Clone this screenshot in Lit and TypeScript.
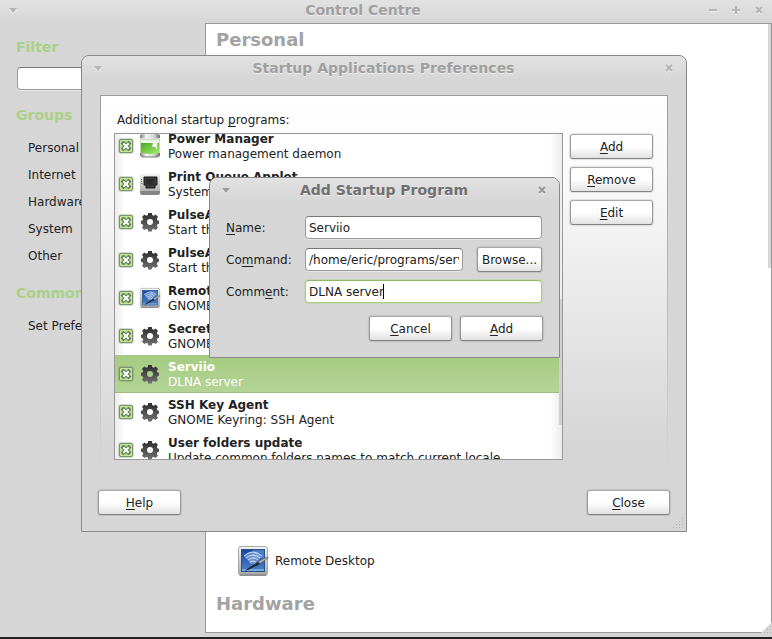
import { LitElement, html, svg, css } from "lit";
import { customElement, property } from "lit/decorators.js";

type IconName = "gear" | "battery" | "printer" | "remote";

const icons = {
  gear: svg`
    <defs>
      <linearGradient id="g" gradientUnits="userSpaceOnUse" x1="0" y1="1" x2="0" y2="19">
        <stop offset="0" stop-color="#2c2c2c" /><stop offset="1" stop-color="#707070" />
      </linearGradient>
      <mask id="hole"><rect width="20" height="20" fill="#fff" /><circle cx="10" cy="10" r="3" fill="#000" /></mask>
    </defs>
    <g mask="url(#hole)">
      <path fill="url(#g)" d="M8.200 1h3.600l.3 2.100 1.800.7 1.800-1.200 2.300 2.300-1.200 1.800.7 1.800 1.500.3v3l-1.500.4-.7 1.800 1.200 1.800-2.300 2.300-1.800-1.200-1.800.7-.3 1.900H8.200l-.3-1.900-1.800-.7-1.800 1.200-2.300-2.300 1.200-1.800-.7-1.800L1 11.800v-3l1.500-.3.7-1.800L2 4.900l2.300-2.300 1.800 1.200 1.800-.7z" />
    </g>`,
  battery: svg`
    <defs>
      <linearGradient id="m" x1="0" x2="1" y1="0" y2="0">
        <stop offset="0" stop-color="#777" /><stop offset=".3" stop-color="#f4f4f4" />
        <stop offset=".7" stop-color="#d8d8d8" /><stop offset="1" stop-color="#666" />
      </linearGradient>
      <linearGradient id="c" x1="0" x2="1" y1="0" y2="1">
        <stop offset="0" stop-color="#4aa825" /><stop offset="1" stop-color="#a5ec68" />
      </linearGradient>
    </defs>
    <path d="M0 2V0q0-2 3-2h14q3 0 3 2v2q-10 2-20 0z" fill="url(#m)" />
    <path d="M.5 3q9.500 1.500 19 0v15H.5z" fill="#edf5e8" stroke="#c6d8ba" />
    <path d="M1 7h18v10q-9 2-18 0z" fill="url(#c)" />
    <path d="M13 7h4v7l-1.500-3H12z" fill="#fff" />
    <path d="M0 17q10 2 20 0v2q0 2-3 2H3q-3 0-3-2z" fill="url(#m)" />
    <path d="M2 21h16" stroke="#777" />`,
  printer: svg`
    <defs>
      <linearGradient id="p" x1="0" x2="0" y1="0" y2="1">
        <stop offset="0" stop-color="#f2f2f2" /><stop offset="1" stop-color="#a8a8a8" />
      </linearGradient>
    </defs>
    <rect x="0" y="0" width="20" height="20" rx="2" fill="url(#p)" />
    <path d="M0 17h20v1q0 3-2 3H2q-2 0-2-3z" fill="#858585" />
    <path d="M4 3h13v8h-2v3H6v-3H4z" fill="#3a3a3a" stroke="#1a1a1a" stroke-linejoin="round" />
    <path d="M7 10V5M9 11V5M11 11V5M13 11V5" stroke="#202020" />
    <rect x="1" y="5" width="1" height="1" fill="#d33" /><rect x="1" y="7" width="1" height="1" fill="#d33" />
    <rect x="1" y="9" width="1" height="1" fill="#2c9a36" />`,
  remote: svg`
    <defs>
      <linearGradient id="r" x1="0" x2="0" y1="0" y2="1">
        <stop offset="0" stop-color="#f6f6f6" /><stop offset="1" stop-color="#a8a8a8" />
      </linearGradient>
      <linearGradient id="b" x1="0" x2="0" y1="0" y2="1">
        <stop offset="0" stop-color="#19479b" /><stop offset="1" stop-color="#4c83cc" />
      </linearGradient>
    </defs>
    <rect x=".5" y=".5" width="29" height="29" rx="2.5" fill="url(#r)" stroke="#a8a8a8" />
    <path d="M2 29h26" stroke="#777" />
    <rect x="3.5" y="3.5" width="23" height="22" fill="url(#b)" stroke="#2a5090" />
    <path d="M15 4h11v9q-6-2-11 0z" fill="#5d92d6" opacity=".7" />
    <path d="M4 23h22v2H4z" fill="#8db6e8" opacity=".7" />
    <path d="M6 10q9-9 18 0l-7 8h-4z" fill="#8fb3e2" opacity=".6" />
    <g fill="none" stroke="#dbe8f8" stroke-width="1" opacity=".9">
      <path d="M6 10q9-8 18 0" /><path d="M8 12q7-6 14 0" /><path d="M10 14q5-4 10 0" /><path d="M12 16q3-2 6 0" />
    </g>
    <path d="M7 25l2-2 11-7 2 2-12 6z" fill="#262626" />
    <path d="M20 15.500l9-4.500 1.500 1-8.500 5.500z" fill="#b4b4b4" stroke="#555" stroke-width=".6" />`,
};

@customElement("app-icon")
export class AppIcon extends LitElement {
  @property() name: IconName = "gear";

  static styles = css`
    :host { display: block; }
    .icon { display: block; width: 100%; height: 100%; overflow: visible; }
  `;

  render() {
    const box = this.name === "remote" ? "0 0 30 30" : "0 0 20 20";
    return html`<svg class="icon" viewBox=${box} aria-hidden="true">${icons[this.name]}</svg>`;
  }
}

const base = css`
  :host, * { box-sizing: border-box; }
  .btn {
    flex: none; width: 83px; height: 25px; padding: 0;
    font: inherit; color: #222;
    border: 1px solid #999; border-top-color: #aaa; border-bottom-color: #808080;
    border-radius: 3px;
    background: linear-gradient(#fff 50%, #e2e2e2);
    box-shadow: 0 0 1px 1px rgba(0, 0, 0, .1);
  }
  .btn.small { width: 65px; }
  .field {
    width: 100%; min-width: 0; height: 23px; padding: 0 3px;
    font: inherit; color: #222; background: #fff;
    border: 1px solid #999; border-top-color: #777;
    border-radius: 4px; outline: none;
    box-shadow: 0 1px 0 #e9e9e9;
  }
  .field.active { border-color: #a9d17c; border-top-color: #8fb765; box-shadow: 0 0 0 1px #c7d6b8; }
  u { text-decoration-thickness: 1px; text-underline-offset: 2px; text-decoration-skip-ink: none; }
`;

@customElement("title-bar")
export class TitleBar extends LitElement {
  @property() label = "";
  @property({ type: Boolean }) full = false;
  @property({ type: Boolean }) focused = false;

  static styles = css`
    :host { display: block; }
    .bar {
      box-sizing: border-box; height: 23px; display: flex; align-items: center;
      padding: 0 12px 0 11px; color: #a0a0a0;
      background: linear-gradient(#e2e2e2, #d6d6d6);
      border-radius: 7px 7px 0 0;
      font: bold 14px/20px "DejaVu Sans", sans-serif;
    }
    .bar.full { padding: 0 8px 3px; border-radius: 0; }
    .bar.focused { color: #707070; }
    .title { flex: 1; margin: 0; font: inherit; text-align: center; white-space: nowrap; text-shadow: 0 1px 0 #eee; }
    .tool { padding: 0; border: 0; background: none; color: #b4b4b4; display: block; }
    .focused .tool { color: #999; }
    .tools { display: flex; gap: 13px; }
    .glyph { display: block; width: 10px; height: 10px; filter: drop-shadow(0 1px 0 #f2f2f2); }
  `;

  render() {
    const glyph = (label: string, d: string) => html`
      <button class="tool" aria-label=${label}>
        <svg class="glyph" viewBox="0 0 10 10"><path d=${d} fill="none" stroke="currentColor" stroke-width="2" /></svg>
      </button>`;
    return html`
      <div class="bar ${this.focused ? "focused" : ""} ${this.full ? "full" : ""}">
        <button class="tool" aria-label="Window menu">
          <svg class="glyph" viewBox="0 0 10 10"><path d="M1 3h8L5 8z" fill="currentColor" /></svg>
        </button>
        <h1 class="title">${this.label}</h1>
        <div class="tools">
          ${this.full ? html`${glyph("Minimise", "M1 5h8")}${glyph("Maximise", "M1 5h8M5 1v8")}` : ""}
          ${glyph("Close", "M2 2l6 6M8 2l-6 6")}
        </div>
      </div>`;
  }
}

@customElement("add-program-dialog")
export class AddProgramDialog extends LitElement {
  static styles = [base, css`
    :host { display: block; background: #d6d6d6; border: 1px solid #888; border-radius: 8px 8px 0 0; }
    .form { padding: 14px 16px 16px; display: grid; grid-template-columns: 79px 1fr; row-gap: 7px; align-items: center; }
    .row { display: flex; align-items: center; gap: 14px; height: 25px; padding-right: 1px; position: relative; }
    .caret { position: absolute; left: 78px; top: 5px; width: 1px; height: 15px; background: #000; }
    .actions { grid-column: 1 / -1; display: flex; justify-content: flex-end; gap: 8px; padding-top: 5px; }
  `];

  render() {
    return html`
      <title-bar label="Add Startup Program" focused></title-bar>
      <form class="form">
        <label for="name"><u>N</u>ame:</label>
        <div class="row"><input class="field" id="name" .value=${"Serviio"} /></div>
        <label for="command">Co<u>m</u>mand:</label>
        <div class="row">
          <input class="field" id="command" .value=${"/home/eric/programs/serviio"} />
          <button class="btn small" type="button">Browse...</button>
        </div>
        <label for="comment">Comm<u>e</u>nt:</label>
        <div class="row"><input class="field active" id="comment" .value=${"DLNA server"} /><span class="caret"></span></div>
        <div class="actions">
          <button class="btn" type="button"><u>C</u>ancel</button>
          <button class="btn" type="button"><u>A</u>dd</button>
        </div>
      </form>`;
  }
}

interface Program { name: string; comment: string; icon: IconName; selected?: boolean }

const programs: Program[] = [
  { name: "Power Manager", comment: "Power management daemon", icon: "battery" },
  { name: "Print Queue Applet", comment: "System tray icon", icon: "printer" },
  { name: "PulseAudio", comment: "Start the sound system", icon: "gear" },
  { name: "PulseAudio", comment: "Start the sound system", icon: "gear" },
  { name: "Remote Desktop", comment: "GNOME Remote Desktop", icon: "remote" },
  { name: "Secret Storage", comment: "GNOME Keyring", icon: "gear" },
  { name: "Serviio", comment: "DLNA server", icon: "gear", selected: true },
  { name: "SSH Key Agent", comment: "GNOME Keyring: SSH Agent", icon: "gear" },
  { name: "User folders update", comment: "Update common folders names to match current locale", icon: "gear" },
];

@customElement("startup-dialog")
export class StartupDialog extends LitElement {
  static styles = [base, css`
    :host {
      display: flex; flex-direction: column;
      background: #d6d6d6; border: 1px solid #888; border-radius: 8px 8px 0 0;
    }
    .panel {
      flex: 1; min-height: 0; margin: 16px 18px 0; padding: 1px 1px 0;
      background: linear-gradient(#999, #d6d6d6);
      display: flex;
    }
    .body {
      flex: 1; min-width: 0; padding: 15px 14px 15px 13px;
      background: linear-gradient(#fff, #fafafa 20%, #d6d6d6 92%);
      display: grid; grid-template: 16px 1fr / 1fr 83px; gap: 6px 7px;
    }
    .caption { grid-column: 1 / -1; padding-left: 3px; line-height: 18px; }
    .listbox {
      position: relative; min-height: 0; overflow: hidden; border: 1px solid #999;
      background: linear-gradient(90deg, #ececec, #fff 10px, #fff calc(100% - 12px), #ececec);
    }
    .list { list-style: none; margin: -7px 0 0; padding: 0; }
    .item { display: flex; align-items: center; height: 38px; padding-left: 4px; line-height: 15px; }
    .item.selected {
      color: #fff; background: linear-gradient(#a5cb80, #b3d496);
      border-bottom: 1px solid #9cbd7c; margin-right: 3px;
    }
    .check {
      appearance: none; flex: none; width: 14px; height: 14px; margin: 0 7px 0 0;
      border: 1px solid #7b9168; border-radius: 2px;
      background: url("data:image/svg+xml,%3Csvg xmlns='http://www.w3.org/2000/svg' viewBox='0 0 12 12'%3E%3Crect x='.5' y='.5' width='11' height='11' fill='none' stroke='%23c3e6a4'/%3E%3Cpath d='M3.500 3.500l5 5M8.500 3.500l-5 5' stroke='%23627b50' stroke-width='4' stroke-linecap='square'/%3E%3Cpath d='M4 4l4 4M8 4l-4 4' stroke='%23fff' stroke-width='2' stroke-linecap='square'/%3E%3C/svg%3E") center / 12px 12px #b0d98c;
      box-shadow: 0 0 0 1px rgba(90, 120, 70, .25);
    }
    .icon { width: 20px; height: 20px; margin-right: 8px; flex: none; }
    .text { padding-top: 2px; }
    .name { display: block; font-weight: bold; white-space: nowrap; }
    .comment { display: block; white-space: nowrap; }
    .thumb { position: absolute; right: 0; top: 165px; width: 3px; height: 126px; background: #d0d0d0; }
    .side { display: flex; flex-direction: column; gap: 8px; padding-top: 1px; }
    .footer { display: flex; justify-content: space-between; padding: 15px 16px 16px; }
    .grip { position: absolute; right: 2px; bottom: 2px; width: 12px; height: 12px; fill: #b0b0b0; }
  `];

  render() {
    return html`
      <title-bar label="Startup Applications Preferences"></title-bar>
      <div class="panel">
        <div class="body">
          <span class="caption">Additional startup <u>p</u>rograms:</span>
          <div class="listbox">
            <ul class="list">
              ${programs.map((p, i) => html`
                <li class="item ${p.selected ? "selected" : ""}">
                  <input class="check" type="checkbox" id="p${i}" checked />
                  <app-icon class="icon" name=${p.icon}></app-icon>
                  <label class="text" for="p${i}"><span class="name">${p.name}</span><span class="comment">${p.comment}</span></label>
                </li>`)}
            </ul>
            <div class="thumb"></div>
          </div>
          <div class="side">
            <button class="btn"><u>A</u>dd</button>
            <button class="btn"><u>R</u>emove</button>
            <button class="btn"><u>E</u>dit</button>
          </div>
        </div>
      </div>
      <div class="footer">
        <button class="btn"><u>H</u>elp</button>
        <button class="btn"><u>C</u>lose</button>
      </div>
      <svg class="grip" viewBox="0 0 12 12" aria-hidden="true">
        ${[[10, 1], [7, 4], [10, 4], [4, 7], [7, 7], [10, 7], [1, 10], [4, 10], [7, 10], [10, 10]].map(
          ([x, y]) => svg`<rect x=${x} y=${y} width="1" height="1" />`)}
      </svg>`;
  }
}

@customElement("app-root")
export class AppRoot extends LitElement {
  static styles = [base, css`
    :host {
      display: flex; flex-direction: column; position: relative; overflow: hidden;
      height: 100vh; color: #222; background: #d6d6d6;
      font: 12px/16px "DejaVu Sans", sans-serif;
      border-bottom: 2px solid #222;
    }
    .content { flex: 1; min-height: 0; display: grid; grid-template-columns: 205px 1fr; }
    .sidebar { padding: 14px 16px; }
    .heading { margin: 0; font: bold 14px/20px "DejaVu Sans", sans-serif; color: #aad088; white-space: nowrap; }
    .filter { margin: 10px 0 15px; padding-left: 1px; }
    .nav { list-style: none; margin: 9px 0 14px; padding: 0 0 0 12px; }
    .nav li { height: 27px; line-height: 28px; }
    .nav a, .app { color: inherit; text-decoration: none; white-space: nowrap; }
    .main {
      position: relative; display: flex; flex-direction: column; margin-bottom: 4px; padding: 5px 10px 17px;
      background: #fff; border: 1px solid #999;
    }
    .section { margin: 0; font: bold 18px/22px "DejaVu Sans", sans-serif; color: #a3a3a3; }
    .app { display: flex; align-items: center; gap: 7px; margin: auto 0 17px 22px; }
    .app-icon { width: 30px; height: 30px; }
    .scroll { position: absolute; top: 0; right: 0; width: 3px; height: 244px; background: #d6d6d6; }
    .corner { position: absolute; right: -1px; bottom: -1px; width: 11px; height: 11px; }
    .startup { position: absolute; left: 81px; right: 85px; top: 55px; bottom: 105px; }
    .add { position: absolute; left: 209px; top: 177px; width: 351px; }
  `];

  render() {
    const groups = ["Personal", "Internet", "Hardware", "System", "Other"];
    return html`
      <title-bar label="Control Centre" full></title-bar>
      <div class="content">
        <nav class="sidebar">
          <h2 class="heading"><label for="filter">Filter</label></h2>
          <div class="filter"><input class="field" id="filter" /></div>
          <h2 class="heading">Groups</h2>
          <ul class="nav">${groups.map((g) => html`<li><a href="#${g}">${g}</a></li>`)}</ul>
          <h2 class="heading">Common Tasks</h2>
          <ul class="nav"><li><a href="#prefs">Set Preferences</a></li></ul>
        </nav>
        <main class="main">
          <h2 class="section">Personal</h2>
          <a class="app" href="#remote"><app-icon class="app-icon" name="remote"></app-icon>Remote Desktop</a>
          <h2 class="section">Hardware</h2>
          <div class="scroll"></div>
          <svg class="corner" viewBox="0 0 11 11" aria-hidden="true">
            <path d="M11 0v11H0z" fill="#d6d6d6" />
            <path d="M9 4h1v1H9zM6 7h1v1H6zM9 7h1v1H9zM3 10h1v1H3zM6 10h1v1H6zM9 10h1v1H9z" fill="#aaa" />
          </svg>
        </main>
      </div>
      <startup-dialog class="startup"></startup-dialog>
      <add-program-dialog class="add"></add-program-dialog>`;
  }
}
